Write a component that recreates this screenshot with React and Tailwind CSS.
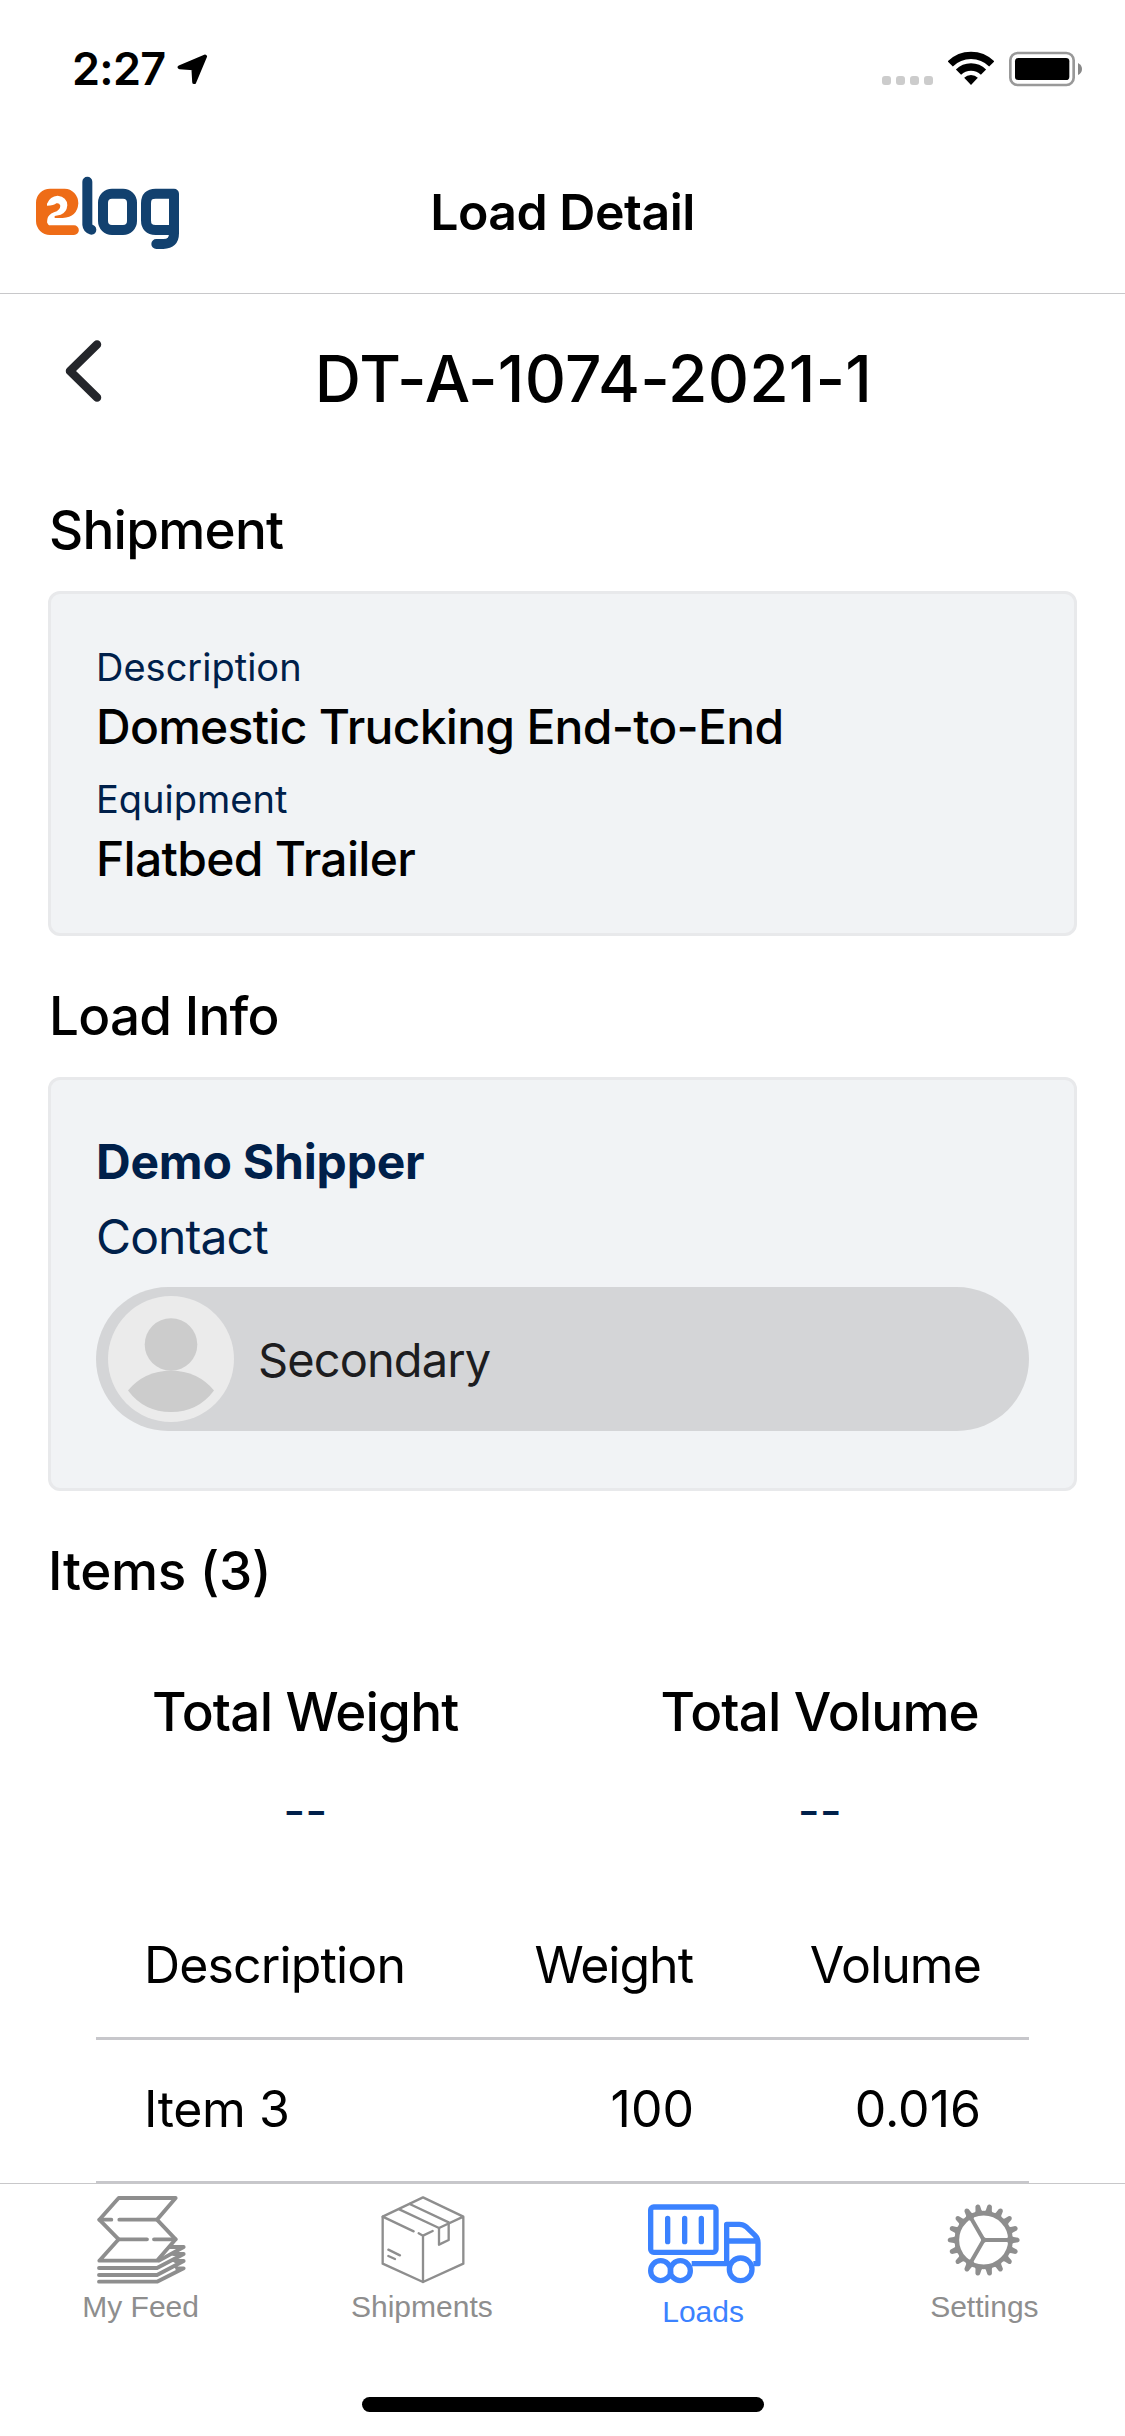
import React from 'react';

const items = [{ name: 'Item 3', weight: '100', volume: '0.016' }];

function LocationArrow() {
  return (
    <svg width="31" height="31" viewBox="177 53.5 31 31" fill="currentColor" stroke="currentColor" strokeWidth="4" strokeLinejoin="round">
      <path d="M205 56 L179.6 66.8 L193.4 67.8 L194.2 81.6 Z" />
    </svg>
  );
}

function StatusBar() {
  return (
    <div className="flex h-[132px] items-start justify-between pr-[43px] pl-[72px]">
      <div className="flex items-center pt-[45px]">
        <span className="w-[95px] text-[45px] leading-[48px] font-semibold tracking-[-0.7px]">2:27</span>
        <span className="ml-[10px]">
          <LocationArrow />
        </span>
      </div>
      <div className="flex items-end pt-[51px]">
        <div className="mr-[15px] mb-[2px] flex gap-[5px]">
          {[0, 1, 2, 3].map((n) => (
            <span key={n} className="h-[9px] w-[9px] rounded-[3px] bg-[#cccccc]" />
          ))}
        </div>
        <svg width="46" height="36" viewBox="234 18 138 108" fill="none" stroke="black" strokeWidth="22">
          <path d="M240.8 56.8 A88 88 0 0 1 365.2 56.8" />
          <path d="M265.5 81.5 A53 53 0 0 1 340.5 81.5" />
          <path d="M303 120 L282.5 98.5 A29 29 0 0 1 323.5 98.5 Z" fill="black" stroke="none" />
        </svg>
        <svg className="ml-[15px]" width="73" height="36" viewBox="417 18 219 108">
          <rect x="421" y="24" width="190" height="96" rx="22" fill="none" stroke="#999999" strokeWidth="8" />
          <rect x="435" y="39" width="163" height="66" rx="10" fill="black" />
          <path d="M624 54 Q636 60 636 72 Q636 84 624 90 Z" fill="#888888" />
        </svg>
      </div>
    </div>
  );
}

function Logo() {
  return (
    <svg width="145" height="74" viewBox="15 -12 435 222" fill="none" strokeLinecap="round" strokeLinejoin="round">
      <path
        d="M60 26 H104 A41 44 0 0 1 145 70 Q142 112 98 114 H70 Q52 115 52 125 Q52 136 62 136 H132 A14.5 14.5 0 0 1 132 165 H60 A42 42 0 0 1 18 123 V68 A42 42 0 0 1 60 26 Z"
        fill="#ee6c17"
      />
      <path
        d="M51 71 Q60 48 83 47 Q111 50 112 76 Q110 98 92 104 L74 108 V116 L60 136 L52 128 V118 Q54 104 72 97 Q91 90 91 77 Q88 68 79 70 Q72 77 51 77 Z"
        fill="white"
      />
      <g stroke="#12416f" strokeWidth="30">
        <path d="M172 5 V134 Q173 145 184 149" />
        <rect x="219" y="41" width="87" height="109" rx="27" />
        <path d="M432 150 H377 Q348 150 348 121 V70 Q348 41 377 41 H432 V160 Q432 192 400 192 H379" />
      </g>
    </svg>
  );
}

function Header() {
  return (
    <header className="grid h-[162px] grid-cols-3 items-center border-b border-[#c8c8ca]">
      <div className="pl-[35px]">
        <Logo />
      </div>
      <h1 className="pb-[2px] text-center text-[50px] leading-[60px] font-semibold tracking-[-0.5px] whitespace-nowrap">Load Detail</h1>
    </header>
  );
}

function SectionTitle({ children }) {
  return <h2 className="mt-[48px] mb-[29px] h-[64px] pl-px text-[53px] leading-[64px] font-medium tracking-[-0.75px]">{children}</h2>;
}

function Avatar() {
  return (
    <svg width="126" height="126" viewBox="0 0 126 126">
      <circle cx="63" cy="63" r="63" fill="#ebebeb" />
      <circle cx="63" cy="48.5" r="26.3" fill="#cccccc" />
      <path d="M20 94.5 Q36 75 63 74.5 Q90 75 106 94.5 Q90 116 63 116 Q36 116 20 94.5 Z" fill="#cccccc" />
    </svg>
  );
}

function FeedIcon() {
  return (
    <svg width="92" height="90" viewBox="104 78 276 270" fill="none" stroke="currentColor" strokeWidth="11.5" strokeLinejoin="round" strokeLinecap="round">
      <path d="M175 84 H346 L290 149 L346 208 L290 272 H117 L175 208 L117 149 Z" />
      <path d="M117 149 H153 M177 149 H290 M175 208 H260 M281 208 H346" />
      <path d="M330 231 H370 L296 272 M340 252 H370 L290 294 H116 M345 273 H370 L290 315 H116 M350 295 H370 L290 335 H116" />
    </svg>
  );
}

function BoxIcon() {
  return (
    <svg width="92" height="90" viewBox="948 78 276 270" fill="none" stroke="currentColor" strokeWidth="7" strokeLinejoin="round" strokeLinecap="round">
      <path d="M1137 174 L1210 140 L1089 82 L968 140 V281 L1089 336 L1210 281 V140" />
      <path d="M968 140 L1061 184 M1076 190 L1089 197 L1118 183 M1089 197 V336" />
      <path d="M1049 102 L1166 157 V210 L1137 224 V174 L1018 118" />
      <path d="M985 239 L1020 256 M985 258 L1005 267" />
    </svg>
  );
}

function TruckIcon() {
  return (
    <svg width="120" height="90" viewBox="69 78 360 270" fill="none" stroke="currentColor" strokeWidth="16" strokeLinejoin="round">
      <rect x="92" y="111" width="196" height="136" rx="9" />
      <path d="M143 145 V215 M194 145 V215 M244 145 V215" strokeLinecap="round" />
      <path d="M215 281 H330 M320 283 V163 H358 Q370 163 378 170 L405 196 Q414 205 414 218 V281 H400 M320 213 H414" />
      <circle cx="122" cy="302" r="30" />
      <circle cx="181" cy="302" r="30" />
      <circle cx="362" cy="298" r="34" fill="white" />
    </svg>
  );
}

function GearIcon() {
  const teeth = Array.from({ length: 18 }, (_, i) => i * 20);
  return (
    <svg width="92" height="90" viewBox="955 78 276 270">
      <g transform="translate(1092 210)" fill="currentColor">
        {teeth.map((a) => (
          <path key={a} d="M82 -13 L90 -9 L103 -7 Q108 -5 108 0 Q108 5 103 7 L90 9 L82 13 Z" transform={`rotate(${a})`} />
        ))}
        <circle r="80.5" fill="none" stroke="currentColor" strokeWidth="14" />
        {[0, 120, 240].map((a) => (
          <path key={a} d="M0 -6 H70 L78 -12 V12 L70 6 H0 Z" transform={`rotate(${a})`} />
        ))}
        <circle r="8" />
      </g>
    </svg>
  );
}

const tabs = [
  { label: 'My Feed', Icon: FeedIcon },
  { label: 'Shipments', Icon: BoxIcon },
  { label: 'Loads', Icon: TruckIcon, active: true },
  { label: 'Settings', Icon: GearIcon },
];

function TabBar() {
  return (
    <nav className="flex h-[253px] shrink-0 flex-col items-center justify-between border-t border-[#c8c8ca] bg-white pt-[12px] pb-[24px]">
      <div className="grid w-full grid-cols-4">
        {tabs.map(({ label, Icon, active }) => (
          <div key={label} className={active ? 'flex flex-col items-center text-[#3b82ff]' : 'flex flex-col items-center text-[#8e8e8e]'}>
            <Icon />
            <span
              className={
                active
                  ? "mt-[9px] font-['Liberation_Sans',sans-serif] text-[30px] leading-[34px]"
                  : "mt-[4px] font-['Liberation_Sans',sans-serif] text-[30px] leading-[34px]"
              }
            >
              {label}
            </span>
          </div>
        ))}
      </div>
      <div className="h-[15px] w-[402px] rounded-full bg-black" />
    </nav>
  );
}

function TableRow({ cells }) {
  return (
    <div className="flex h-[144px] items-center border-b-[3px] border-[#c7c7cb] pr-[48px] pb-[3px] pl-[48px] text-[50px] leading-[60px]">
      {cells}
    </div>
  );
}

export default function App() {
  return (
    <div className="flex h-[2436px] w-[1125px] flex-col overflow-hidden bg-white font-[Inter,sans-serif] text-black">
      <StatusBar />
      <Header />
      <main className="min-h-0 flex-1 overflow-hidden">
        <div className="flex h-[156px] pr-[47px] pl-[63px]">
          <svg className="mt-[44px]" width="41" height="66" viewBox="63 338 41 66" fill="none" stroke="#24262b" strokeWidth="8.5" strokeLinecap="round" strokeLinejoin="round">
            <path d="M97 344.5 L70 371 L97 397.5" />
          </svg>
          <div className="ml-[5px] flex-1 pt-[45px] text-center text-[64px] leading-[80px] font-medium tracking-[0.2px]">DT-A-1074-2021-1</div>
        </div>

        <div className="px-[48px]">
          <SectionTitle>Shipment</SectionTitle>
          <section className="h-[345px] rounded-[12px] border-[3px] border-[#e8e9eb] bg-[#f1f3f5] px-[45px] pt-[50px]">
            <div className="text-[38px] leading-[46px] text-[#00204a]">Description</div>
            <div className="mt-[8px] text-[48px] leading-[58px] font-medium tracking-[-0.72px]">Domestic Trucking End-to-End</div>
            <div className="mt-[20px] text-[38px] leading-[46px] text-[#00204a]">Equipment</div>
            <div className="mt-[8px] text-[48px] leading-[58px] font-medium tracking-[-0.7px]">Flatbed Trailer</div>
          </section>

          <SectionTitle>Load Info</SectionTitle>
          <section className="h-[414px] rounded-[12px] border-[3px] border-[#e8e9eb] bg-[#f1f3f5] px-[45px] pt-[53px]">
            <div className="text-[48px] leading-[58px] font-bold tracking-[-0.2px] text-[#00204a]">Demo Shipper</div>
            <div className="mt-[17px] text-[48px] leading-[58px] tracking-[-0.9px] text-[#00204a]">Contact</div>
            <div className="mt-[21px] flex h-[144px] items-center rounded-full bg-[#d4d5d7] pl-[12px]">
              <Avatar />
              <span className="ml-[24px] pt-[2px] text-[47px] leading-[58px] tracking-[-0.9px] text-[#1d1d1f]">Secondary</span>
            </div>
          </section>

          <h2 className="mt-[48px] h-[64px] text-[53px] leading-[64px] font-medium tracking-[-0.3px]">Items (3)</h2>

          <div className="mt-[77px] grid grid-cols-2 text-center">
            <div className="text-[53px] leading-[64px] font-medium tracking-[-0.8px]">Total Weight</div>
            <div className="text-[53px] leading-[64px] font-medium tracking-[-0.85px]">Total Volume</div>
            <div className="mt-[38px] text-[48px] leading-[58px] text-[#00204a]">--</div>
            <div className="mt-[38px] text-[48px] leading-[58px] text-[#00204a]">--</div>
          </div>

          <div className="mt-[56px] px-[48px]">
            <TableRow
              cells={
                <>
                  <span className="flex-1 tracking-[-0.85px]">Description</span>
                  <span className="w-[260px] text-right tracking-[-1px]">Weight</span>
                  <span className="w-[288px] text-right tracking-[-0.9px]">Volume</span>
                </>
              }
            />
            {items.map((item) => (
              <TableRow
                key={item.name}
                cells={
                  <>
                    <span className="flex-1 tracking-[-0.4px]">{item.name}</span>
                    <span className="w-[261px] text-right">{item.weight}</span>
                    <span className="w-[287px] text-right">{item.volume}</span>
                  </>
                }
              />
            ))}
          </div>
        </div>
      </main>
      <TabBar />
    </div>
  );
}
